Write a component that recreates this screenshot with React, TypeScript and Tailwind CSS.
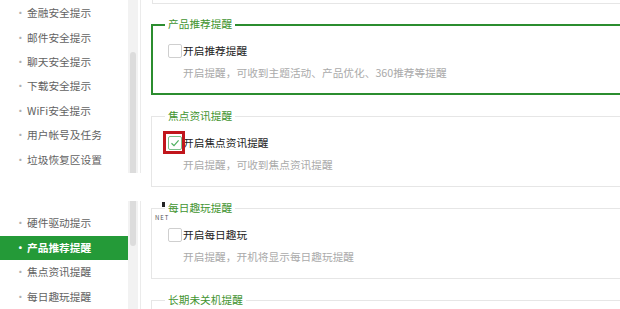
import React from 'react';

const topItems = ['金融安全提示', '邮件安全提示', '聊天安全提示', '下载安全提示', 'WiFi安全提示', '用户帐号及任务', '垃圾恢复区设置'];
const bottomItems = ['硬件驱动提示', '产品推荐提醒', '焦点资讯提醒', '每日趣玩提醒'];

const font = { fontFamily: '"Noto Sans CJK SC", "Noto Sans", sans-serif' };

function NavItem({ label, active, h }: { label: string; active?: boolean; h: string }) {
  return (
    <div
      className={
        'flex items-center w-[128px] text-[10.7px] ' + h + ' ' +
        (active ? 'bg-[#249a38] text-white font-bold' : 'text-[#626262]')
      }
    >
      <span className={'w-[27px] pl-[15px] ' + (active ? 'text-white' : 'text-[#b0b0b0]')}>·</span>
      <span>{label}</span>
    </div>
  );
}

function Checkbox({ checked }: { checked?: boolean }) {
  return (
    <span
      className={
        'relative w-[14px] h-[14px] shrink-0 rounded-[2px] bg-white flex items-center justify-center border ' +
        (checked ? 'border-[#7cc08a]' : 'border-[#cfcfcf]')
      }
    >
      {checked && (
        <svg width="10" height="10" viewBox="0 0 10 10" fill="none">
          <path d="M1.5 5.2 L4 7.6 L8.6 2.4" stroke="#4fb05f" strokeWidth="1.2" />
        </svg>
      )}
      {checked && <span className="absolute -left-[6px] -top-[6px] w-[22px] h-[23px] border-[3px] border-[#c1161c]" />}
    </span>
  );
}

function Box({
  title,
  label,
  desc,
  green,
  checked,
}: {
  title: string;
  label?: string;
  desc?: string;
  green?: boolean;
  checked?: boolean;
}) {
  return (
    <div
      className={
        'w-[520px] h-[71px] shrink-0 ' +
        (green ? 'border-2 border-[#2b8d2f]' : 'border border-[#e6e6e6] pt-[1px] pl-[1px]')
      }
    >
      <div className="w-fit ml-[12px] px-[3px] -mt-[9px] bg-white text-[10.7px] leading-[14px] text-[#3f9430]">
        {title}
      </div>
      {label && (
        <div className="pl-[15px] mt-[13px]">
          <div className="flex items-center gap-[1px] h-[14px]">
            <Checkbox checked={checked} />
            <span className="text-[10.7px] text-[#222] leading-[14px]">{label}</span>
          </div>
          <div className="pl-[15px] mt-[8px] text-[10.7px] leading-[14px] text-[#aaa]">{desc}</div>
        </div>
      )}
    </div>
  );
}

function Scroll({ thumb }: { thumb: string }) {
  return (
    <div className="w-[10px] bg-[#f2f2f2] flex flex-col">
      <div className={'mx-[2px] bg-[#dcdcdc] ' + thumb} />
    </div>
  );
}

export default function App() {
  return (
    <div className="w-[620px] h-[309px] overflow-hidden bg-white flex relative" style={font}>
      {/* sidebar, two stitched parts */}
      <div className="w-[141px] shrink-0 flex flex-col">
        <div className="h-[182px] flex border-r border-[#ebebeb]">
          <div className="w-[128px] pt-[1px]">
            {topItems.map((t) => (
              <NavItem key={t} label={t} h="h-[24.4px]" />
            ))}
          </div>
          <Scroll thumb="mt-[52px] flex-1 rounded-t-[4px]" />
          <div className="w-[2px]" />
        </div>
        <div className="h-[30px]" />
        <div className="flex-1 flex border-r border-[#ebebeb]">
          <div className="w-[128px] pt-[10px]">
            {bottomItems.map((t, i) => (
              <NavItem key={t} label={t} active={i === 1} h="h-[24.5px]" />
            ))}
          </div>
          <Scroll thumb="h-[45px] rounded-b-[4px]" />
          <div className="w-[2px]" />
        </div>
      </div>

      {/* settings panel */}
      <div className="shrink-0 w-[540px] pl-[10px] flex flex-col">
        <div className="w-[520px] h-[4px] shrink-0 ml-[1px] border-l border-b border-[#e6e6e6]" />
        <div className="mt-[20px] flex flex-col gap-[21px]">
          <Box green title="产品推荐提醒" label="开启推荐提醒" desc="开启提醒，可收到主题活动、产品优化、360推荐等提醒" />
          <Box checked title="焦点资讯提醒" label="开启焦点资讯提醒" desc="开启提醒，可收到焦点资讯提醒" />
          <Box title="每日趣玩提醒" label="开启每日趣玩" desc="开启提醒，开机将显示每日趣玩提醒" />
          <Box title="长期未关机提醒" />
        </div>
      </div>

      {/* watermark left in the stitched screenshot */}
      <span className="absolute left-[162px] top-[202px] w-[3px] h-[5px] bg-[#222]" />
      <span className="absolute left-[155px] top-[215px] text-[6px] leading-[6px] tracking-[1px] text-[#555]">NET</span>
    </div>
  );
}
